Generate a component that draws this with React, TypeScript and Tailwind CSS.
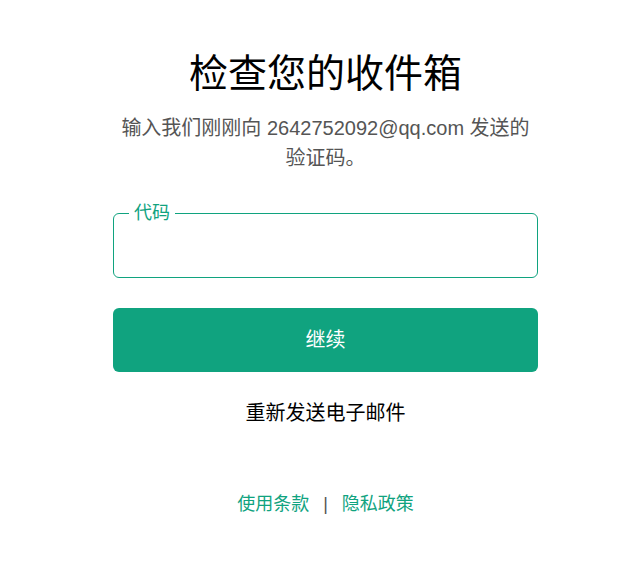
import React from 'react';

const font = { fontFamily: '"Liberation Sans", "Noto Sans CJK SC", sans-serif' };

const App: React.FC = () => {
  return (
    <div className="w-[628px] h-[571px] bg-white" style={font}>
      <div className="ml-[113px] w-[425px] pt-[50px] flex flex-col items-center">
        <h1 className="text-[39px] leading-[47px] text-black font-normal">检查您的收件箱</h1>
        <p className="mt-[16px] text-[20px] leading-[30px] text-[#555] text-center">
          输入我们刚刚向 2642752092@qq.com 发送的
          <br />
          验证码。
        </p>

        <div className="relative mt-[40px] w-full h-[65px] border border-[#10a37f] rounded-[6px]">
          <span className="absolute left-[15px] top-[-13px] bg-white px-[5px] text-[18px] leading-[24px] text-[#10a37f]">
            代码
          </span>
        </div>

        <button className="mt-[30px] w-full h-[64px] rounded-[6px] bg-[#10a37f] text-white text-[20px]">
          继续
        </button>

        <a href="#" className="mt-[27px] text-[20px] leading-[28px] text-black">
          重新发送电子邮件
        </a>

        <div className="mt-[65px] flex items-center text-[18px] leading-[24px]">
          <a href="#" className="text-[#10a37f]">使用条款</a>
          <span className="mx-[14px] text-[#555]">|</span>
          <a href="#" className="text-[#10a37f]">隐私政策</a>
        </div>
      </div>
    </div>
  );
};

export default App;
